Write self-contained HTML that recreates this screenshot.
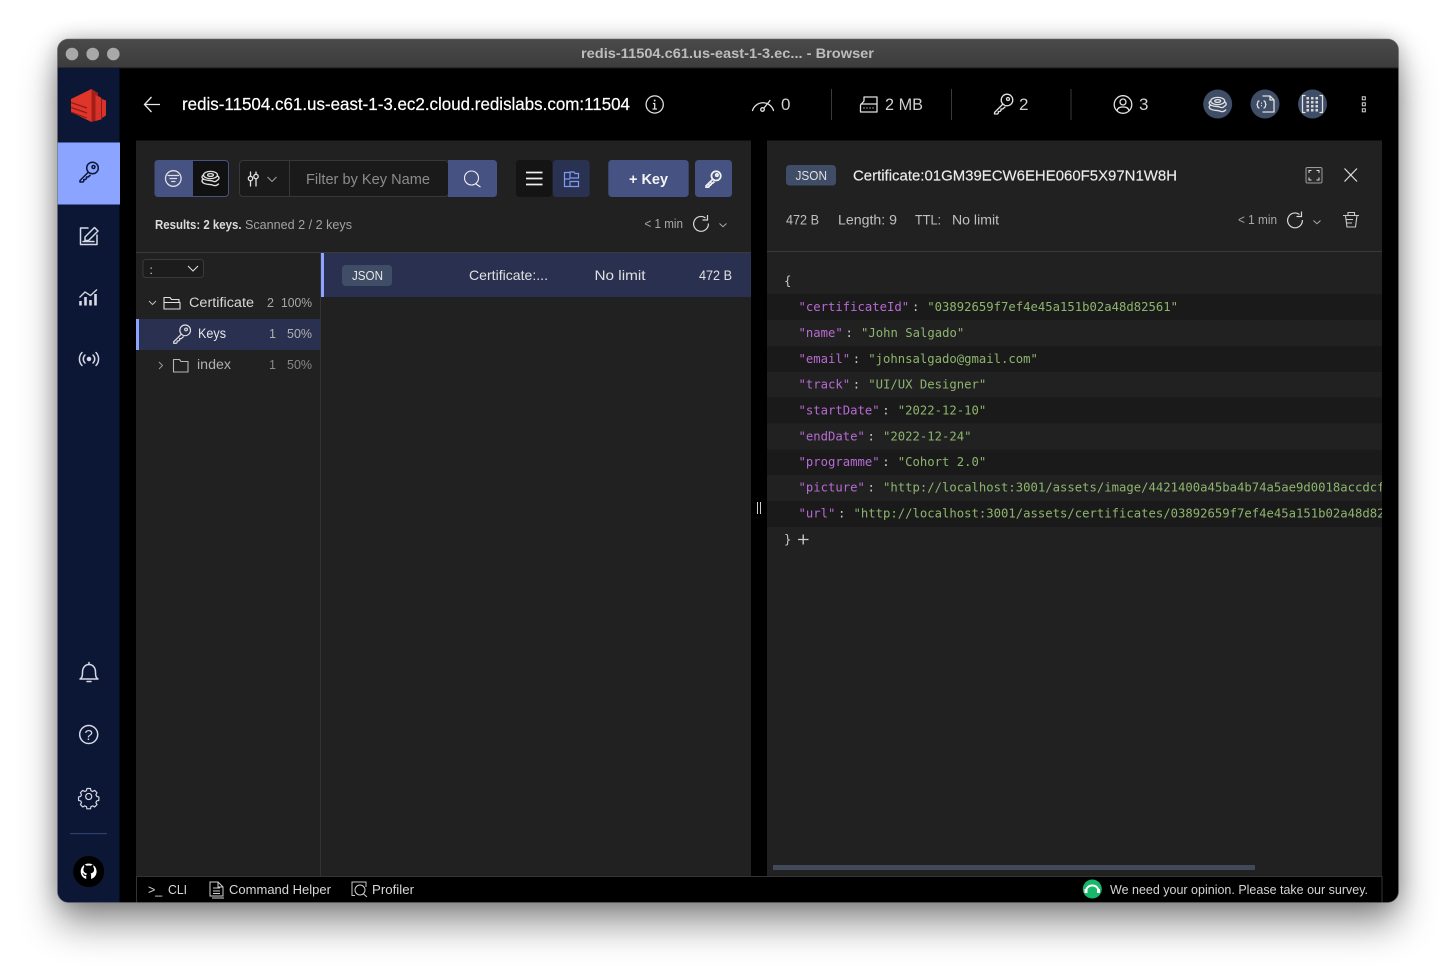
<!DOCTYPE html>
<html><head><meta charset="utf-8"><title>Browser</title>
<style>
html,body{margin:0;padding:0;background:#fff;width:1456px;height:979px;overflow:hidden}
#sh{position:absolute;left:58px;top:40px;width:1340px;height:862px;border-radius:11px;box-shadow:0 22px 38px rgba(0,0,0,.42),0 0 22px rgba(0,0,0,.28)}
svg{position:absolute;left:0;top:0}
text{font-family:"Liberation Sans",sans-serif;white-space:pre}
.m text,text.m{font-family:"DejaVu Sans Mono",monospace;font-size:12.25px}
.k{fill:#b76bd2}.v{fill:#8db56e}.p{fill:#c8c8c8}
.i{fill:none;stroke:#e0e0e0;stroke-width:1.3;stroke-linecap:round;stroke-linejoin:round}
.n{fill:none;stroke:#d6d9e4;stroke-width:1.5;stroke-linecap:round;stroke-linejoin:round}
</style></head><body>
<div id="sh"></div>
<svg width="1456" height="979" viewBox="0 0 1456 979" xmlns="http://www.w3.org/2000/svg">
<defs>
<clipPath id="win"><rect x="57.5" y="39" width="1341" height="863.5" rx="11"/></clipPath>
<clipPath id="rp"><rect x="767" y="262" width="615" height="300"/></clipPath>
<linearGradient id="tb" x1="0" y1="0" x2="0" y2="1"><stop offset="0" stop-color="#4a4a4a"/><stop offset="1" stop-color="#3c3c3c"/></linearGradient>
<g id="stack"><ellipse cx="0" cy="-4" rx="7" ry="3.6"/><ellipse cx="0" cy="-4" rx="3" ry="1.4"/><path d="M-7-4c-2 1-2 3 0 4 3 2 7 1 9 2s3 1 5-1M-7 0c-2 1-2 3 0 4 3 2 7 1 9 2s4 1 6-1M7-3c2 1 2 3 0 4"/></g>
<g id="key"><circle cx="4.5" cy="-4.5" r="5.8"/><circle cx="5.5" cy="-5.5" r="1.5"/><path d="M0.5-.5L-8 8v1.5h3l.8-.8v-1.700h1.700l1-1V4.500h1.700L2.500 2.500"/></g>
</defs>

<g clip-path="url(#win)">
<rect x="57" y="39" width="1342" height="864" fill="#000"/>
<rect x="57" y="39" width="1342" height="29" fill="url(#tb)"/>
<rect x="57" y="67.500" width="1342" height="1" fill="#1a1a1a"/>
<circle cx="72" cy="54" r="6.300" fill="#a8a8a8"/><circle cx="92.700" cy="54" r="6.300" fill="#a8a8a8"/><circle cx="113.300" cy="54" r="6.300" fill="#a8a8a8"/>
<text x="581" y="58" font-size="13.500" font-weight="700" fill="#bdbdbd" textLength="293" lengthAdjust="spacingAndGlyphs">redis-11504.c61.us-east-1-3.ec... - Browser</text>

<!-- sidebar -->
<rect x="57" y="68" width="62.500" height="835" fill="#0c1736"/>
<rect x="57" y="142.500" width="63" height="62" fill="#8ba4ff"/>
<!-- logo -->
<path d="M71 99L91.500 89V122L71 112Z" fill="#e0352b"/>
<path d="M91.500 89L98 93V120L91.500 122Z" fill="#a32019"/>
<path d="M95.500 95L101 97.500V119.500L95.500 121Z" fill="#d8332a"/>
<path d="M101 98L102 98.500V119L101 119.500Z" fill="#8f1b15"/>
<path d="M102 99L106 100.500V115.500L102 118Z" fill="#d8332a"/>
<path d="M71 102.500L87 108M71 107.500L87 113M71 112L87 118" stroke="#8f1d17" stroke-width="1.200" fill="none"/>
<!-- nav icons -->
<g transform="translate(88 172.500)" fill="none" stroke="#0c1736" stroke-width="1.500" stroke-linejoin="round"><use href="#key"/></g>
<g class="n" stroke-width="1.300"><path d="M88 228H80.500V244.500H97V235"/><path d="M85 240.500V237L94.500 227.500L98 231L88.500 240.500Z"/><path d="M83 241.500H94"/></g>
<g stroke="#d6d9e4" stroke-width="2.600" fill="none"><path d="M80.500 305.500V301M85.500 305.500V297M90.500 305.500V300M95.500 305.500V294"/></g>
<path d="M79.500 297.500L85 292L90.500 295.500L97 289.500" stroke="#d6d9e4" stroke-width="1.300" fill="none"/>
<g class="n" stroke-width="1.300"><circle cx="89" cy="359" r="1.500" fill="#d6d9e4"/><path d="M85 355a5.500 5.500 0 0 0 0 8M93 355a5.500 5.500 0 0 1 0 8M82 352.500a9.500 9.500 0 0 0 0 13M96 352.500a9.500 9.500 0 0 1 0 13"/></g>
<g class="n" stroke-width="1.200"><path d="M80 679c2.500-1.500 2.500-4 2.500-7 0-4 2.500-7.500 6.500-7.500s6.500 3.500 6.500 7.500c0 3 0 5.500 2.500 7Z"/><path d="M87 681.500h4M89 664.500v-2"/></g>
<g class="n" stroke-width="1.300"><circle cx="88.700" cy="734.500" r="9"/></g>
<text x="84.500" y="740" font-size="15" fill="#d6d9e4">?</text>
<g class="n" stroke-width="1.500" transform="translate(88.700 796.500) scale(.8)"><circle r="3.800"/><path d="M-2.200-10h4.400l.6 2.700 2.200 1 2.400-1.400 3 3-1.400 2.400 1 2.200 2.700.6v4.400l-2.700.6-1 2.200 1.400 2.400-3 3-2.400-1.400-2.200 1-.6 2.700h-4.400l-.6-2.700-2.200-1-2.400 1.400-3-3 1.400-2.400-1-2.200-2.700-.6v-4.400l2.700-.6 1-2.200-1.400-2.400 3-3 2.400 1.400 2.200-1Z"/></g>
<rect x="70" y="833" width="37" height="1.200" fill="#2f3f6b"/>
<circle cx="88.700" cy="871.500" r="15.500" fill="#000"/>
<path d="M88.700 863.500c-4.400 0-8 3.500-8 8 0 3.500 2.300 6.500 5.500 7.500v-3c-2.300.4-2.800-1-3-1.600-.4-.8-1-1-1-1 1-.5 1.800.4 2.300 1.100.8 1.200 1.800.7 2 .4 0-.7.300-1.200.6-1.400-2-.3-3.700-1.200-3.700-4.100 0-1 .4-1.800.9-2.400-.3-.6-.3-1.700 0-2.200 0 0 1-.2 2.500 1 1.200-.4 2.700-.4 3.900 0 1.500-1.200 2.500-1 2.500-1 .3.500.3 1.600 0 2.200.5.600.9 1.400.9 2.400 0 2.900-1.700 3.800-3.700 4.100.4.300.7.900.7 1.800V879c3.200-1 5.500-4 5.500-7.500 0-4.500-3.600-8-8-8Z" fill="#fff"/>

<!-- header -->
<path d="M160 104.500H145M151.500 97L144.500 104.500L151.500 112" stroke="#e8e8e8" stroke-width="1.300" fill="none"/>
<text x="182" y="110" font-size="17.500" fill="#fff" stroke="#fff" stroke-width=".2" textLength="448" lengthAdjust="spacingAndGlyphs">redis-11504.c61.us-east-1-3.ec2.cloud.redislabs.com:11504</text>
<g class="i" stroke="#c8c8c8"><circle cx="654.700" cy="104.500" r="8.600"/><path d="M654.700 103.500V109M653 109H656.500M653.500 103.500H654.700"/></g>
<circle cx="654.700" cy="100.500" r="1" fill="#d8d8d8"/>
<g class="i"><path d="M752.500 110.500a11 11 0 0 1 21 0"/><circle cx="762.500" cy="109.500" r="1.800"/><path d="M764 108L770 100.500"/></g>
<text x="781" y="110" font-size="17" fill="#cfcfcf" textLength="10.500">0</text>
<rect x="831" y="89" width="1" height="31" fill="#3a3a3a"/><rect x="951" y="89" width="1" height="31" fill="#3a3a3a"/><rect x="1070.500" y="89" width="1" height="31" fill="#3a3a3a"/>
<g class="i"><path d="M864 97H877V112H860.500V105L864 101ZM877 104H861M864 108h0M867 108h0M870 108h0M873 108h0"/></g>
<text x="885" y="110" font-size="17" fill="#cfcfcf" textLength="38" lengthAdjust="spacingAndGlyphs">2 MB</text>
<g class="i" transform="translate(1002.500 104.500)"><use href="#key"/></g>
<text x="1019" y="110" font-size="17" fill="#cfcfcf" textLength="10">2</text>
<g class="i"><circle cx="1123" cy="104.500" r="8.800"/><circle cx="1123" cy="102" r="3"/><path d="M1117 110.500c1-3 3-3.500 6-3.500s5 .5 6 3.500"/></g>
<text x="1139" y="110" font-size="17" fill="#cfcfcf" textLength="10">3</text>
<circle cx="1217.700" cy="104" r="14.500" fill="#3f4d67"/><circle cx="1265" cy="104" r="14.500" fill="#3f4d67"/><circle cx="1312.500" cy="104" r="14.500" fill="#3f4d67"/>
<g class="i" transform="translate(1217.700 105)" stroke="#f0f0f0" stroke-width="1.100"><use href="#stack"/></g>
<g class="i" stroke="#e8e8e8" stroke-width="1"><path d="M1263 96H1270L1274 100V112H1263M1270 96V100H1274"/><path d="M1259 101c-2 0-1 3-2 3.500 1 .5 0 3.500 2 3.500M1264 101c2 0 1 3 2 3.500-1 .5 0 3.500-2 3.500"/></g>
<path d="M1261.500 102.500v1.200M1261.500 105v1.200" stroke="#e8e8e8" stroke-width="1"/>
<g class="i" stroke="#e8e8e8"><path d="M1305 95.500H1302.500V112.500H1305M1320 95.500H1322.500V112.500H1320"/></g>
<g fill="#d8d8d8"><rect x="1306.500" y="97" width="2.500" height="2.500"/><rect x="1311" y="97" width="2.500" height="2.500"/><rect x="1315.500" y="97" width="2.500" height="2.500"/><rect x="1306.500" y="101" width="2.500" height="2.500"/><rect x="1311" y="101" width="2.500" height="2.500"/><rect x="1315.500" y="101" width="2.500" height="2.500"/><rect x="1306.500" y="105" width="2.500" height="2.500"/><rect x="1311" y="105" width="2.500" height="2.500"/><rect x="1315.500" y="105" width="2.500" height="2.500"/><rect x="1306.500" y="109" width="2.500" height="2.500"/><rect x="1311" y="109" width="2.500" height="2.500"/><rect x="1315.500" y="109" width="2.500" height="2.500"/></g>
<g fill="none" stroke="#d8d8d8" stroke-width="1"><rect x="1362.300" y="96.800" width="3" height="3"/><rect x="1362.300" y="102.800" width="3" height="3"/><rect x="1362.300" y="108.800" width="3" height="3"/></g>

<!-- left panel -->
<rect x="136" y="140.500" width="615" height="736" fill="#212121"/>
<rect x="136" y="252" width="615" height="1" fill="#3a3a3a"/>
<rect x="320" y="253" width="1" height="623" fill="#333"/>
<!-- filter toggle -->
<rect x="155" y="160.500" width="73.500" height="36" rx="3.500" fill="#111" stroke="#465282"/>
<path d="M158 160H193V197H158a3.500 3.500 0 0 1-3.500-3.500V163.500A3.500 3.500 0 0 1 158 160Z" fill="#465282"/>
<g class="i" stroke="#f2f2f2" stroke-width="1.200"><circle cx="173.300" cy="178.500" r="7.800"/><path d="M168 175.500H178.500M170 178.500H176.500M171.700 181.500H175"/></g>
<g class="i" transform="translate(210.500 179)" stroke="#cfcfcf" stroke-width=".9"><use href="#stack"/></g>
<rect x="239.500" y="160.500" width="209" height="36" rx="3.500" fill="#1a1a1a" stroke="#383838"/>
<rect x="289" y="161" width="1" height="35" fill="#383838"/>
<g class="i" stroke="#eee" stroke-width="1.100"><path d="M250.500 172V176M250.500 181V186M256 172V174M256 179V186"/><circle cx="250.500" cy="178.500" r="2.200"/><circle cx="256" cy="176.500" r="2.200"/></g>
<path d="M267.500 177L272 181.500L276.500 177" stroke="#aaa" stroke-width=".9" fill="none"/>
<text x="306" y="184" font-size="14.500" fill="#8c8c8c" textLength="124" lengthAdjust="spacingAndGlyphs">Filter by Key Name</text>
<path d="M448 160H493.500A3.500 3.500 0 0 1 497 163.500V193.500A3.500 3.500 0 0 1 493.500 197H448Z" fill="#465282"/>
<circle cx="471.500" cy="178" r="7" fill="none" stroke="#f0f0f0" stroke-width="1.100"/><path d="M476 184L480.500 187" stroke="#f0f0f0" stroke-width="1.100"/>
<rect x="516" y="160" width="36" height="37" rx="3.500" fill="#141414"/>
<path d="M526 172.500H542.500M526 178.500H542.500M526 184.500H542.500" stroke="#f0f0f0" stroke-width="1.700"/>
<rect x="553" y="160" width="36.700" height="37" rx="3.500" fill="#2a3251"/>
<g fill="none" stroke="#7f9bf5" stroke-width="1.200"><path d="M564.500 172V186.500H570M564.500 179H570M570 172.500H564.500M570 176.500V172H574L575 173.500H578.500V178H570ZM570 181.500H578.500V186.500H570Z"/></g>
<rect x="608.300" y="160" width="80.400" height="37" rx="3.500" fill="#465282"/>
<text x="629" y="184" font-size="15" font-weight="700" fill="#f5f5f5" textLength="39" lengthAdjust="spacingAndGlyphs">+ Key</text>
<rect x="695" y="160" width="37" height="37" rx="3.500" fill="#465282"/>
<g transform="translate(712.500 179.500) scale(.8)" fill="none" stroke="#f2f2f2" stroke-width="2.200"><use href="#key"/></g>
<text x="155" y="229" font-size="12.500" font-weight="700" fill="#dcdcdc" textLength="86.500" lengthAdjust="spacingAndGlyphs">Results: 2 keys.</text>
<text x="245" y="229" font-size="12.500" fill="#a2a2a2" textLength="107" lengthAdjust="spacingAndGlyphs">Scanned 2 / 2 keys</text>
<text x="644.500" y="228" font-size="12.500" fill="#a8a8a8" textLength="38.500" lengthAdjust="spacingAndGlyphs">&lt; 1 min</text>
<g fill="none" stroke="#d8d8d8" stroke-width="1.200"><path d="M705.500 218A7.400 7.400 0 1 0 708.400 223.500M707.500 215V220H702.500"/></g>
<path d="M719.500 223.500L723 226.700L726.500 223.500" stroke="#aaa" stroke-width="1" fill="none"/>

<!-- tree -->
<rect x="143" y="259.500" width="60.500" height="18" rx="3" fill="#1c1c1c" stroke="#3a3a3a"/>
<text x="149.500" y="274" font-size="12" fill="#ddd">:</text>
<path d="M188 266L193 271L198 266" stroke="#ddd" stroke-width="1.100" fill="none"/>
<path d="M149 301L152.500 304.500L156 301" stroke="#bbb" stroke-width="1" fill="none"/>
<path d="M164 309V297.500H170L171.500 299.500H179V302.500M164 309L164 302.500H180L180 309Z" fill="none" stroke="#e0e0e0" stroke-width="1.100" stroke-linejoin="round"/>
<text x="189" y="307" font-size="13.500" fill="#d8d8d8" textLength="65" lengthAdjust="spacingAndGlyphs">Certificate</text>
<text x="267" y="307" font-size="12.500" fill="#a8a8a8">2</text>
<text x="281" y="307" font-size="12.500" fill="#a8a8a8" textLength="31" lengthAdjust="spacingAndGlyphs">100%</text>
<rect x="136" y="319" width="184" height="31" fill="#2a3050"/>
<rect x="136" y="319" width="3" height="31" fill="#8ba4ff"/>
<g class="i" transform="translate(181 334.500) scale(.92)" stroke-width="1.100" stroke="#ddd"><use href="#key"/></g>
<text x="198" y="338" font-size="13.500" fill="#e8e8e8" textLength="28" lengthAdjust="spacingAndGlyphs">Keys</text>
<text x="269" y="338" font-size="12.500" fill="#b0b0b0">1</text>
<text x="287" y="338" font-size="12.500" fill="#b0b0b0" textLength="25" lengthAdjust="spacingAndGlyphs">50%</text>
<path d="M159 362L162.500 365.500L159 369" stroke="#999" stroke-width="1" fill="none"/>
<path d="M173.500 372V359.500H179.500L181 361.500H188V372Z" fill="none" stroke="#b8b8b8" stroke-width="1.100" stroke-linejoin="round"/>
<text x="197" y="369" font-size="13.500" fill="#b0b0b0" textLength="34" lengthAdjust="spacingAndGlyphs">index</text>
<text x="269" y="369" font-size="12.500" fill="#888">1</text>
<text x="287" y="369" font-size="12.500" fill="#888" textLength="25" lengthAdjust="spacingAndGlyphs">50%</text>

<!-- list row -->
<rect x="321" y="253" width="430" height="44" fill="#2a3050"/>
<rect x="321" y="253" width="3" height="44" fill="#8ba4ff"/>
<rect x="342" y="265" width="50" height="21" rx="3.500" fill="#3f4d67"/>
<text x="352" y="280" font-size="12.500" fill="#e8e8e8" textLength="31" lengthAdjust="spacingAndGlyphs">JSON</text>
<text x="469" y="280" font-size="14" fill="#e0e0e0" textLength="79" lengthAdjust="spacingAndGlyphs">Certificate:...</text>
<text x="594.500" y="280" font-size="14" fill="#e0e0e0" textLength="51" lengthAdjust="spacingAndGlyphs">No limit</text>
<text x="699" y="280" font-size="13.500" fill="#e0e0e0" textLength="33" lengthAdjust="spacingAndGlyphs">472 B</text>

<!-- resize handle -->
<path d="M757.500 502V514M760.500 502V514" stroke="#d0d0d0" stroke-width="1"/>

<!-- right panel -->
<rect x="767" y="140.500" width="615" height="736" fill="#212121"/>
<rect x="767" y="251" width="615" height="1" fill="#3a3a3a"/>
<rect x="786" y="165" width="50" height="20.500" rx="3.500" fill="#3f4d67"/>
<text x="795.500" y="180" font-size="12.500" fill="#e0e0e0" textLength="31.500" lengthAdjust="spacingAndGlyphs">JSON</text>
<text x="853" y="180.500" font-size="14.500" fill="#ececec" stroke="#ececec" stroke-width=".15" textLength="324" lengthAdjust="spacingAndGlyphs">Certificate:01GM39ECW6EHE060F5X97N1W8H</text>
<rect x="1306" y="167.500" width="16" height="15.500" rx="1.500" fill="#2a2a2a" stroke="#9a9a9a" stroke-width="1"/>
<path d="M1309 173V170.500H1311.500M1316.500 170.500H1319V173M1319 177.500V180H1316.500M1311.500 180H1309V177.500" fill="none" stroke="#e0e0e0" stroke-width="1"/>
<path d="M1344.500 168.500L1357 181.500M1357 168.500L1344.500 181.500" stroke="#e0e0e0" stroke-width="1.200"/>
<text x="786" y="224.500" font-size="13.500" fill="#c0c0c0" textLength="33" lengthAdjust="spacingAndGlyphs">472 B</text>
<text x="838" y="224.500" font-size="13.500" fill="#c0c0c0" textLength="59" lengthAdjust="spacingAndGlyphs">Length: 9</text>
<text x="915" y="224.500" font-size="13.500" fill="#c0c0c0" textLength="26" lengthAdjust="spacingAndGlyphs">TTL:</text>
<text x="952" y="224.500" font-size="13.500" fill="#c0c0c0" textLength="47" lengthAdjust="spacingAndGlyphs">No limit</text>
<text x="1238" y="224" font-size="12.500" fill="#a8a8a8" textLength="39" lengthAdjust="spacingAndGlyphs">&lt; 1 min</text>
<g fill="none" stroke="#d8d8d8" stroke-width="1.200"><path d="M1299.500 214.500A7.400 7.400 0 1 0 1302.400 220M1301.500 211.500V216.500H1296.500"/></g>
<path d="M1313.500 220.500L1317 223.700L1320.500 220.500" stroke="#aaa" stroke-width="1" fill="none"/>
<g fill="none" stroke="#c8c8c8" stroke-width="1.100"><path d="M1343 215.500H1359M1348 215.500V212.500H1354.500V215.500M1345.500 215.500L1347 227H1355.500L1357 215.500M1346.500 219.500H1353M1347 223H1352"/></g>

<!-- json -->
<rect x="767" y="294" width="615" height="26" fill="#1a1a1a"/>
<rect x="767" y="346" width="615" height="26" fill="#1a1a1a"/>
<rect x="767" y="397.500" width="615" height="26" fill="#1a1a1a"/>
<rect x="767" y="449.500" width="615" height="25.500" fill="#1a1a1a"/>
<rect x="767" y="501" width="615" height="26" fill="#1a1a1a"/>
<g class="m" clip-path="url(#rp)">
<text class="p" x="784" y="285">{</text>
<text class="k" x="798.500" y="311">"certificateId"</text><text class="p" x="912" y="311">:</text><text class="v" x="927.200" y="311">"03892659f7ef4e45a151b02a48d82561"</text>
<text class="k" x="798.500" y="337">"name"</text><text class="p" x="845.500" y="337">:</text><text class="v" x="861" y="337">"John Salgado"</text>
<text class="k" x="798.500" y="363">"email"</text><text class="p" x="852.800" y="363">:</text><text class="v" x="868.300" y="363">"johnsalgado@gmail.com"</text>
<text class="k" x="798.500" y="388.700">"track"</text><text class="p" x="852.800" y="388.700">:</text><text class="v" x="868.300" y="388.700">"UI/UX Designer"</text>
<text class="k" x="798.500" y="414.500">"startDate"</text><text class="p" x="882.300" y="414.500">:</text><text class="v" x="897.800" y="414.500">"2022-12-10"</text>
<text class="k" x="798.500" y="440.500">"endDate"</text><text class="p" x="867.500" y="440.500">:</text><text class="v" x="883" y="440.500">"2022-12-24"</text>
<text class="k" x="798.500" y="466">"programme"</text><text class="p" x="882.300" y="466">:</text><text class="v" x="897.800" y="466">"Cohort 2.0"</text>
<text class="k" x="798.500" y="491.700">"picture"</text><text class="p" x="867.500" y="491.700">:</text><text class="v" x="883" y="491.700">"http://localhost:3001/assets/image/4421400a45ba4b74a5ae9d0018accdcf.png"</text>
<text class="k" x="798.500" y="517.500">"url"</text><text class="p" x="838" y="517.500">:</text><text class="v" x="853.500" y="517.500">"http://localhost:3001/assets/certificates/03892659f7ef4e45a151b02a48d82561.png"</text>
<text class="p" x="784" y="543.500">}</text>
</g>
<path d="M798 539.500H808.500M803.200 534.500V544.500" stroke="#d0d0d0" stroke-width="1.300"/>
<rect x="773" y="865" width="482" height="5" fill="#424a5a"/>

<!-- bottom bar -->
<rect x="136.500" y="876.500" width="1245.500" height="27" fill="#000" stroke="#333"/>
<text x="148" y="894" font-size="12.500" fill="#d8d8d8">&gt;_</text>
<text x="168" y="894" font-size="12.500" fill="#d8d8d8" textLength="19" lengthAdjust="spacingAndGlyphs">CLI</text>
<path d="M210 896V882H218L223 887V896ZM218 882V887H223M213 888H220M213 891H220M213 893.500H220M212 898H224" fill="none" stroke="#d0d0d0" stroke-width="1"/>
<text x="229" y="894" font-size="13" fill="#d8d8d8" textLength="102" lengthAdjust="spacingAndGlyphs">Command Helper</text>
<path d="M355 895.500H352V882H366V887" fill="none" stroke="#c8c8c8" stroke-width="1"/>
<circle cx="360" cy="890" r="5" fill="none" stroke="#d0d0d0" stroke-width="1"/><path d="M363.500 894L367 897" stroke="#d0d0d0" stroke-width="1"/>
<text x="372" y="894" font-size="13" fill="#d8d8d8" textLength="42" lengthAdjust="spacingAndGlyphs">Profiler</text>
<circle cx="1092.300" cy="889" r="9.500" fill="#18b86b"/>
<path d="M1086 892c0-4 2.500-6.500 6.300-6.500s6.300 2.500 6.300 6.500" fill="none" stroke="#fff" stroke-width="2"/>
<rect x="1084.500" y="889" width="3" height="4" fill="#fff"/><rect x="1097" y="889" width="3" height="4" fill="#fff"/>
<text x="1110" y="894" font-size="13" fill="#d4d4d4" textLength="258" lengthAdjust="spacingAndGlyphs">We need your opinion. Please take our survey.</text>
</g>
<rect x="57.500" y="39" width="1341" height="863.500" rx="11" fill="none" stroke="#6a6a6a" stroke-width=".8" opacity=".7"/>
</svg>
</body></html>
